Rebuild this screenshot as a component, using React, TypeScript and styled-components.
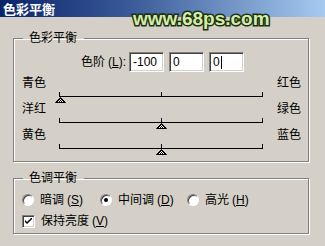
import React from "react";
import styled, { createGlobalStyle } from "styled-components";

const GlobalStyle = createGlobalStyle`
  html, body {
    margin: 0;
    padding: 0;
    background: #d4d0c8;
  }
  body {
    font-family: "Liberation Sans", "Noto Sans CJK SC", sans-serif;
    font-size: 12px;
    color: #000;
  }
`;

// window chrome
const Window = styled.div`
  position: relative;
  width: 325px;
  height: 246px;
  background: #d4d0c8;
  overflow: hidden;
`;
const TitleBar = styled.div`
  height: 17px;
  padding-left: 3px;
  background: linear-gradient(to right, #0a246a 0%, #3a5a98 40%, #a6caf0 100%);
  color: #fff;
  font: bold 13px/17px "Noto Sans CJK SC", sans-serif;
`;
const Watermark = styled.div`
  position: absolute;
  left: 133px;
  top: 9px;
  font: bold 19px/20px "Liberation Sans", sans-serif;
  color: #d6ecaa;
  -webkit-text-stroke: 3px #1c3210;
  paint-order: stroke fill;
`;
const Body = styled.div`
  padding: 14px 0 0 13px;
`;

// group boxes
const Group = styled.fieldset<{ $pb: number }>`
  box-sizing: border-box;
  width: 296px;
  margin: 0;
  padding: 0 0 ${p => p.$pb}px;
  border: 1px solid #808080;
  box-shadow: inset 1px 1px 0 #fff, 1px 1px 0 #fff;

  & + & {
    margin-top: 9px;
  }
`;
const Legend = styled.legend`
  margin-left: 9px;
  padding: 0 7px 0 6px;
  font-size: 12px;
  line-height: 14px;
`;

// level inputs
const LevelRow = styled.div`
  display: flex;
  align-items: center;
  justify-content: flex-end;
  height: 20px;
  margin-top: 7px;
  padding-right: 64px;
`;
const LevelLabel = styled.span`
  margin-right: 3px;
  line-height: 14px;
`;
const Fields = styled.div`
  display: flex;
  gap: 5px;
`;
const Field = styled.div`
  box-sizing: border-box;
  width: 35px;
  height: 20px;
  padding: 2px 0 0 3px;
  background: #fff;
  border: 1px solid;
  border-color: #808080 #fff #fff #808080;
  box-shadow: inset 1px 1px 0 #404040, inset -1px -1px 0 #d4d0c8;
  font: 12px/15px "Liberation Sans", sans-serif;
  display: flex;
  align-items: flex-start;
`;
const Caret = styled.span`
  width: 1px;
  height: 13px;
  margin-left: 1px;
  margin-top: 1px;
  background: #000;
`;

// sliders
const SliderStack = styled.div`
  margin-top: 5px;
`;
const SliderBlock = styled.div`
  height: 26px;
`;
const Ends = styled.div`
  display: flex;
  justify-content: space-between;
  height: 12px;
  line-height: 12px;
  padding: 0 7px 0 8px;
`;
const Track = styled.div`
  position: relative;
  box-sizing: border-box;
  width: 204px;
  height: 14px;
  margin-left: 45px;
  padding-top: 3px;
`;
const Rail = styled.div`
  display: flex;
  justify-content: space-between;
  height: 4px;
  border-bottom: 1px solid #000;
`;
const Tick = styled.span`
  width: 1px;
  height: 4px;
  background: #000;
`;
const Thumb = styled.svg`
  position: absolute;
  top: 8px;
  width: 11px;
  height: 6px;
`;

// tone options
const OptionRow = styled.div<{ $mt: number }>`
  display: flex;
  align-items: center;
  height: 14px;
  margin-top: ${p => p.$mt}px;
  padding-left: 8px;
`;
const Option = styled.label<{ $w?: number }>`
  display: flex;
  align-items: center;
  gap: 6px;
  width: ${p => (p.$w ? `${p.$w}px` : "auto")};
  line-height: 14px;
`;
const Radio = styled.span<{ $on?: boolean }>`
  box-sizing: border-box;
  width: 12px;
  height: 12px;
  border-radius: 50%;
  background: #fff;
  border: 1px solid;
  border-color: #808080 #fff #fff #808080;
  box-shadow: inset 1px 1px 0 #404040;

  &::after {
    content: "";
    display: ${p => (p.$on ? "block" : "none")};
    width: 4px;
    height: 4px;
    margin: 3px 0 0 3px;
    border-radius: 50%;
    background: #000;
  }
`;
const Check = styled.span`
  box-sizing: border-box;
  width: 13px;
  height: 13px;
  background: #fff;
  border: 1px solid;
  border-color: #808080 #fff #fff #808080;
  box-shadow: inset 1px 1px 0 #404040, inset -1px -1px 0 #d4d0c8;
  display: flex;
  align-items: center;
  justify-content: center;
`;
const Key = styled.span`
  font-family: "Liberation Sans", sans-serif;
  margin-left: 3px;
`;

type SliderProps = {
  left: string;
  right: string;
  value: number;
};

const Slider = ({ left, right, value }: SliderProps) => {
  const pos = (value + 100) / 200;
  return (
    <SliderBlock>
      <Ends>
        <span>{left}</span>
        <span>{right}</span>
      </Ends>
      <Track>
        <Rail>
          <Tick />
          <Tick />
          <Tick />
        </Rail>
        <Thumb viewBox="0 0 11 6" style={{ left: `${pos * 203 - 4.5}px` }}>
          <defs>
            <pattern id="hatch" width="2" height="2" patternUnits="userSpaceOnUse">
              <rect width="2" height="2" fill="#fff" />
              <rect width="1" height="1" fill="#000" />
              <rect x="1" y="1" width="1" height="1" fill="#000" />
            </pattern>
          </defs>
          <polygon points="5.5,0.5 10.5,5.5 0.5,5.5" fill="url(#hatch)" stroke="#000" strokeWidth="1" />
        </Thumb>
      </Track>
    </SliderBlock>
  );
};

const Mnemonic = ({ k }: { k: string }) => (
  <Key>
    (<u>{k}</u>)
  </Key>
);

const App = () => (
  <Window>
    <GlobalStyle />
    <TitleBar>色彩平衡</TitleBar>
    <Watermark>www.68ps.com</Watermark>
    <Body>
      <Group $pb={6}>
        <Legend>色彩平衡</Legend>
        <LevelRow>
          <LevelLabel>
            色阶<Mnemonic k="L" />:
          </LevelLabel>
          <Fields>
            <Field>-100</Field>
            <Field>0</Field>
            <Field>
              0<Caret />
            </Field>
          </Fields>
        </LevelRow>
        <SliderStack>
          <Slider left="青色" right="红色" value={-100} />
          <Slider left="洋红" right="绿色" value={0} />
          <Slider left="黄色" right="蓝色" value={0} />
        </SliderStack>
      </Group>
      <Group $pb={5}>
        <Legend>色调平衡</Legend>
        <OptionRow $mt={8}>
          <Option $w={78}>
            <Radio />
            <span>
              暗调<Mnemonic k="S" />
            </span>
          </Option>
          <Option $w={87}>
            <Radio $on />
            <span>
              中间调<Mnemonic k="D" />
            </span>
          </Option>
          <Option>
            <Radio />
            <span>
              高光<Mnemonic k="H" />
            </span>
          </Option>
        </OptionRow>
        <OptionRow $mt={7}>
          <Option>
            <Check>
              <svg width="7" height="7" viewBox="0 0 7 7">
                <path d="M0 2 L0 4 L2 6 L7 1 L7 -1 L2 4 Z" fill="#000" />
              </svg>
            </Check>
            <span>
              保持亮度<Mnemonic k="V" />
            </span>
          </Option>
        </OptionRow>
      </Group>
    </Body>
  </Window>
);

export default App;
